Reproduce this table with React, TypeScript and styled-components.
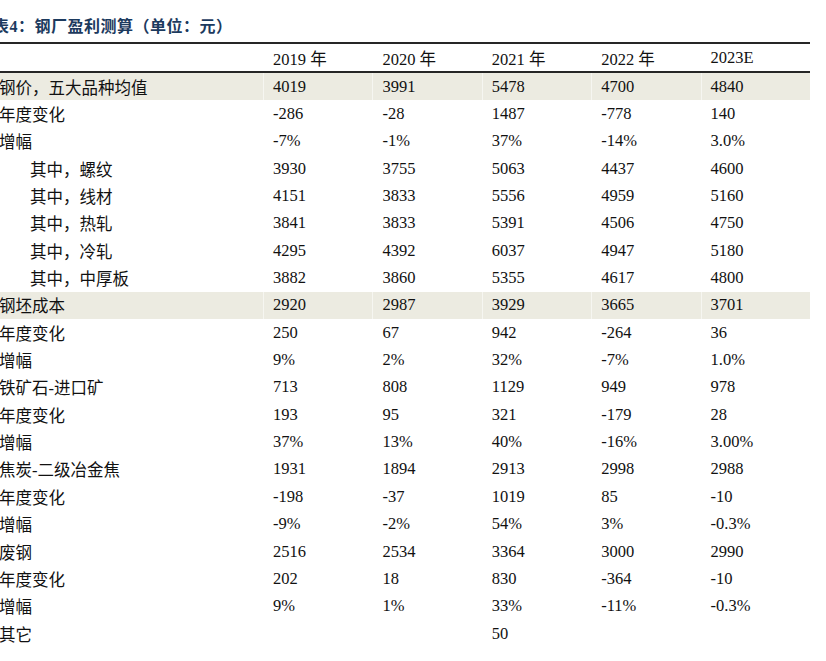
import React from "react";
import styled, { createGlobalStyle } from "styled-components";

const Global = createGlobalStyle`
  html, body { margin: 0; padding: 0; background: #ffffff; }
  body { font-family: "Liberation Serif", "Noto Sans CJK SC", serif; color: #111; }
`;

const Page = styled.div`
  margin-left: -10px;
  width: 820px;
`;

const Title = styled.div`
  box-sizing: border-box;
  height: 42px;
  padding: 18px 0 0 3px;
  font-size: 16px;
  line-height: 18px;
  font-weight: 700;
  letter-spacing: 0.5px;
  color: #1c3a5e;
  white-space: nowrap;
`;

const Table = styled.div`
  border-top: 2px solid #262626;
`;

const Row = styled.div<{ $shade?: boolean; $head?: boolean }>`
  display: grid;
  grid-template-columns: 273px repeat(5, 109.4px);
  height: ${(p) => (p.$head ? "27px" : "27.35px")};
  background: ${(p) => (p.$shade ? "#ecebe1" : "transparent")};
  border-bottom: ${(p) => (p.$head ? "2px solid #262626" : "none")};
`;

const Cell = styled.div<{ $indent?: boolean; $first?: boolean }>`
  display: flex;
  align-items: center;
  padding-left: ${(p) => (p.$indent ? "40px" : "9px")};
  font-size: 16.5px;
  white-space: nowrap;
  border-left: ${(p) => (p.$first ? "none" : "1px solid rgba(255,255,255,0.55)")};
`;

type R = { label: string; vals: string[]; shade?: boolean; indent?: boolean };

const rows: R[] = [
  { label: "钢价，五大品种均值", vals: ["4019", "3991", "5478", "4700", "4840"], shade: true },
  { label: "年度变化", vals: ["-286", "-28", "1487", "-778", "140"] },
  { label: "增幅", vals: ["-7%", "-1%", "37%", "-14%", "3.0%"] },
  { label: "其中，螺纹", vals: ["3930", "3755", "5063", "4437", "4600"], indent: true },
  { label: "其中，线材", vals: ["4151", "3833", "5556", "4959", "5160"], indent: true },
  { label: "其中，热轧", vals: ["3841", "3833", "5391", "4506", "4750"], indent: true },
  { label: "其中，冷轧", vals: ["4295", "4392", "6037", "4947", "5180"], indent: true },
  { label: "其中，中厚板", vals: ["3882", "3860", "5355", "4617", "4800"], indent: true },
  { label: "钢坯成本", vals: ["2920", "2987", "3929", "3665", "3701"], shade: true },
  { label: "年度变化", vals: ["250", "67", "942", "-264", "36"] },
  { label: "增幅", vals: ["9%", "2%", "32%", "-7%", "1.0%"] },
  { label: "铁矿石-进口矿", vals: ["713", "808", "1129", "949", "978"] },
  { label: "年度变化", vals: ["193", "95", "321", "-179", "28"] },
  { label: "增幅", vals: ["37%", "13%", "40%", "-16%", "3.00%"] },
  { label: "焦炭-二级冶金焦", vals: ["1931", "1894", "2913", "2998", "2988"] },
  { label: "年度变化", vals: ["-198", "-37", "1019", "85", "-10"] },
  { label: "增幅", vals: ["-9%", "-2%", "54%", "3%", "-0.3%"] },
  { label: "废钢", vals: ["2516", "2534", "3364", "3000", "2990"] },
  { label: "年度变化", vals: ["202", "18", "830", "-364", "-10"] },
  { label: "增幅", vals: ["9%", "1%", "33%", "-11%", "-0.3%"] },
  { label: "其它", vals: ["", "", "50", "", ""] },
];

const headers = ["2019 年", "2020 年", "2021 年", "2022 年", "2023E"];

export default function App() {
  return (
    <>
      <Global />
      <Page>
        <Title>表4：钢厂盈利测算（单位：元）</Title>
        <Table>
          <Row $head>
            <Cell $first />
            {headers.map((h) => (
              <Cell key={h}>{h}</Cell>
            ))}
          </Row>
          {rows.map((r, i) => (
            <Row key={i} $shade={r.shade}>
              <Cell $first $indent={r.indent}>{r.label}</Cell>
              {r.vals.map((v, j) => (
                <Cell key={j}>{v}</Cell>
              ))}
            </Row>
          ))}
        </Table>
      </Page>
    </>
  );
}
